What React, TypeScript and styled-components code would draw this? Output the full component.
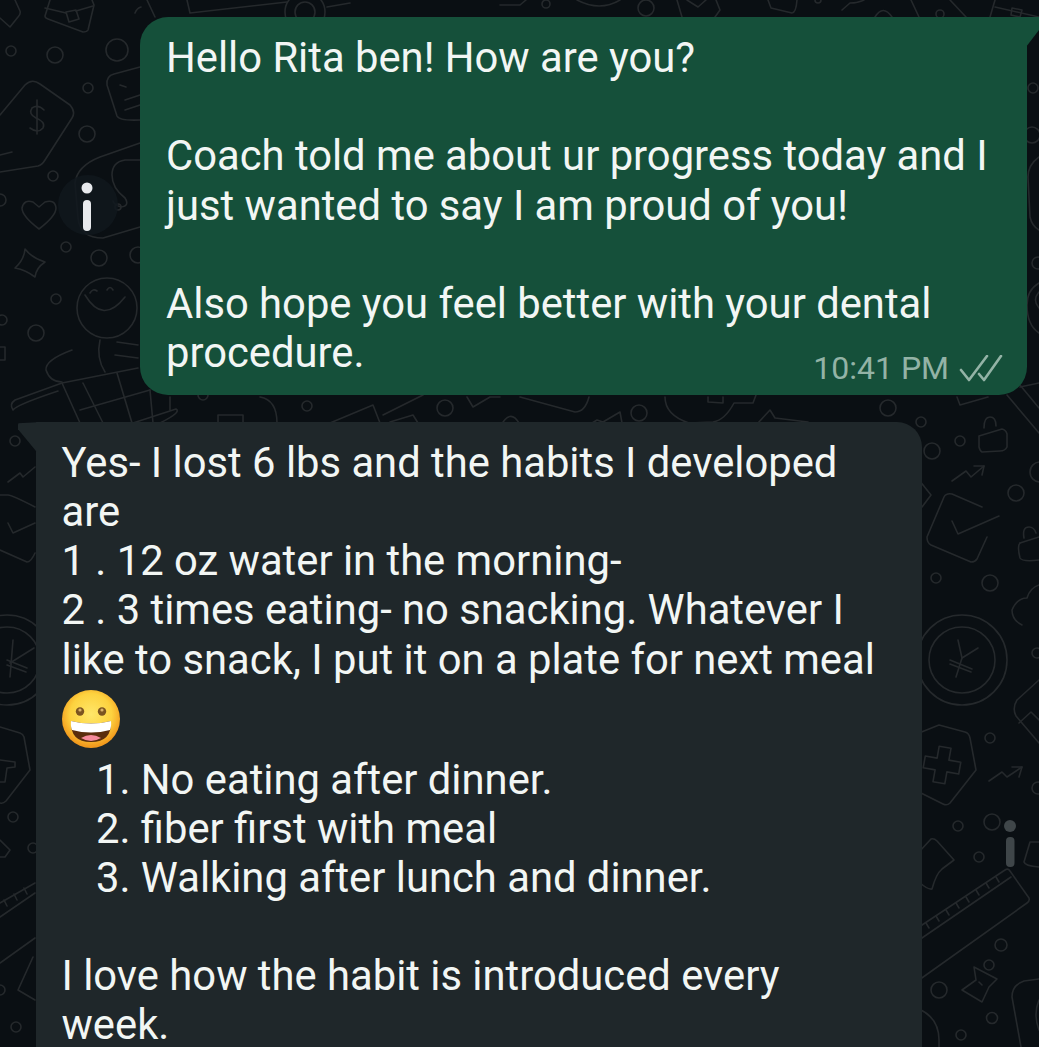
import React from "react";
import styled, { createGlobalStyle } from "styled-components";

const Global = createGlobalStyle`
  html, body { margin: 0; padding: 0; background: #0a0f13; }
  body { width: 1039px; height: 1047px; overflow: hidden; }
`;

const Page = styled.main`
  position: relative;
  width: 1039px;
  height: 1047px;
  overflow: hidden;
  box-sizing: border-box;
  padding-top: 17px;
  display: flex;
  flex-direction: column;
  gap: 27px;
  background: #0a0f13;
  font-family: Roboto, "Liberation Sans", sans-serif;
  color: #f2f6f4;
`;

const DoodleLayer = styled.svg`
  position: absolute;
  inset: 0;
  fill: none;
  stroke: #25292c;
  stroke-width: 1.6;
  stroke-linecap: round;
  stroke-linejoin: round;
`;

const Bubble = styled.section<{ $sent?: boolean }>`
  position: relative;
  flex: none;
  box-sizing: border-box;
  background: ${(p) => (p.$sent ? "#15503a" : "#1f272a")};
  margin-left: ${(p) => (p.$sent ? "140px" : "36px")};
  width: ${(p) => (p.$sent ? "887px" : "886px")};
  padding: ${(p) => (p.$sent ? "16px 24px 14px 26px" : "15.5px 24px 40px 25.5px")};
  border-radius: ${(p) => (p.$sent ? "28px 0 28px 28px" : "0 25px 25px 25px")};
  &::after {
    content: "";
    position: absolute;
    top: 0;
    background: inherit;
    ${(p) =>
      p.$sent
        ? "right: -12px; width: 13px; height: 30px; clip-path: polygon(0 0, 100% 0, 100% 13px, 0 100%);"
        : "left: -18px; width: 19px; height: 30px; border-radius: 3px 0 0 0; clip-path: polygon(0 1px, 100% 0, 100% 100%, 0 7px);"}
  }
`;

const Message = styled.div`
  font-size: 41.75px;
  line-height: 49.2px;
  white-space: pre;
`;

const FooterRow = styled.div`
  display: flex;
  justify-content: space-between;
  align-items: baseline;
`;

const Meta = styled.span`
  display: inline-flex;
  align-items: center;
  gap: 10px;
  font-size: 32px;
  line-height: 49px;
  color: #93b3a6;
  position: relative;
  top: 12px;
`;

const Ticks = styled.svg`
  width: 44px;
  height: 28px;
  fill: none;
  stroke: #93b3a6;
  stroke-width: 2.6;
  stroke-linecap: round;
  stroke-linejoin: round;
`;

const EmojiRow = styled.div`
  height: 71px;
  display: flex;
  align-items: center;
`;

const NumberedList = styled.div`
  padding-left: 34.5px;
  margin-bottom: 48.2px;
`;

const Smile = () => (
  <svg width="58" height="58" viewBox="0 0 58 58" role="img" aria-label="grinning face">
    <defs>
      <radialGradient id="face" cx="50%" cy="42%" r="55%">
        <stop offset="0%" stopColor="#ffe76a" />
        <stop offset="65%" stopColor="#fdd23f" />
        <stop offset="100%" stopColor="#f29a1d" />
      </radialGradient>
    </defs>
    <circle cx="29" cy="29" r="29" fill="url(#face)" />
    <circle cx="18" cy="21.5" r="4.2" fill="#7b5420" />
    <circle cx="40" cy="21.5" r="4.2" fill="#7b5420" />
    <circle cx="18" cy="20" r="1.6" fill="#d9b26c" />
    <circle cx="40" cy="20" r="1.6" fill="#d9b26c" />
    <path d="M9 31 Q29 36 49 31 Q50 52 29 52 Q8 52 9 31Z" fill="#5a2d0c" />
    <path d="M9 31 Q29 36 49 31 Q49.5 37 48 40 Q29 45 10 40 Q8.5 37 9 31Z" fill="#fff" />
    <path d="M19 48 Q29 42 39 48 Q29 54 19 48Z" fill="#f58a9a" />
  </svg>
);

const lines: string[] = [
  // top edge
  "M500 5H520L526 0", "M577 0Q600 12 620 0", "M677 0L682 17", "M687 0L698 7L706 0", "M716 0L720 10L715 17",
  "M768 0L771 8L792 13Q796 13 797 0", "M842 10L850 3Q858 3 864 0", "M911 0L919 17", "M950 0L966 17",
  "M995 0L990 17", "M995 7L1039 17", "M1012 8L1022 10L1020 17L1011 15Z", "M875 17Q883 4 892 17",
  "M147 0L155 17", "M187 0L190 13L287 2", "M327 7L350 3", "M135 13Q137 8 141 7",
  // top-left
  "M15 0L20 11Q21 14 18 17L10 27L0 18", "M50 0L45 16Q45 18 48 19L83 32Q87 32 88 30L94 5L92 0",
  "M66 12L76 10L79 19L69 22Z", "M45 8L66 13", "M76 11L93 6",
  "M0 115L25 85Q32 78 40 84L70 105Q76 112 72 118L45 160Q42 165 38 166L0 172", "M0 155L12 152",
  "M44 110Q38 104 32 108Q28 114 36 118Q46 122 43 128Q38 134 30 128", "M37 100L37 134",
  "M140 67L114 74Q106 76 107 85L117 116Q119 121 140 120", "M120 85L126 87", "M125 100L140 95", "M125 110L140 105",
  "M39 229Q22 216 22 208Q24 199 33 202L39 207L45 202Q55 199 56 208Q56 216 39 229Z",
  "M25 249Q32 258 45 262Q36 268 35 277Q26 270 15 268Q24 260 25 249Z",
  "M140 143L100 157Q77 166 75 183L78 218Q80 238 103 238L140 227", "M140 160H125Q112 162 112 175Q112 188 125 198Q130 206 121 207Q114 205 113 201",
  "M85 295Q103 325 125 297", "M90 293Q93 288 97 291", "M107 290Q110 285 113 290",
  "M72 350Q45 360 46 370Q50 382 62 382", "M100 340Q96 358 105 372", "M117 342L138 345", "M115 355L138 358",
  "M0 347H5V360H0",
  // cart
  "M62 383L15 400Q9 404 13 410Q16 405 58 391", "M62 383L138 368", "M62 383L80 423", "M83 383L103 423", "M117 373L132 423", "M80 410L150 390", "M150 390L153 423", "M170 397V410", "M133 423L176 409Q182 412 160 423",
  // band between bubbles
  "M218 423V415H243V423", "M260 397Q277 400 277 423", "M330 423L373 405L380 423", "M383 415L423 395", "M390 422L413 415L418 423", "M467 397L473 407L490 397H500",
  "M520 397L575 412Q585 412 589 397", "M500 427Q510 408 519 423", "M584 428L597 420L603 422L620 412L622 423",
  "M665 397Q665 415 689 423L713 422Q725 420 734 403H753L756 395", "M708 397V402L723 403V397", "M758 423L770 410L775 418L808 422",
  "M957 397L960 405L988 397",
  // ruler top right
  "M1007 395L1039 433", "M1020 385L1039 408", "M1020 387L1039 383",
  // right of first bubble
  "M1039 157Q1028 165 1028 177L1030 217Q1032 226 1039 230", "M1039 283Q1027 290 1027 305Q1027 325 1039 333", "M1039 292Q1032 300 1039 308",
  // right column
  "M979 436L1002 429Q1006 430 1007 434L1007 447Q1005 451 1000 451L982 452Q980 451 979 447Z", "M984 428Q984 417 990 417Q996 417 996 426",
  "M952 481L966 471L971 477L984 466", "M974 466H984L982 475",
  "M982 507L952 494Q946 493 944 497L927 537Q927 543 931 545L971 562Q975 562 977 559L987 537",
  "M952 521L958 534L999 516",
  "M1020 543L1039 537", "M1020 543Q1017 546 1020 558Q1022 562 1039 560", "M1024 538Q1022 527 1029 527Q1034 527 1036 533",
  "M1039 585Q1030 588 1027 598Q1017 598 1012 610Q1012 620 1022 625",
  "M919 480L931 495L922 507",
  "M958 640L962 658", "M978 648L962 658L956 677", "M950 660L972 669", "M950 664L971 672",
  "M919 733L939 725L965 732Q969 733 970 738L976 770L950 803Q947 806 943 804L919 792",
  "M939.2 746.2L951 748.3L948.9 760.1L960.8 762.2L958.7 774L946.9 771.9L944.8 783.8L933 781.7L935.1 769.9L923.2 767.8L925.3 756L937.1 758.1Z",
  "M989 781L1002 772L1007 777L1022 767", "M1012 767H1022L1019 777",
  "M1039 680L1017 700Q1012 708 1016 716L1039 743", "M1019 723L1031 712L1039 720",
  "M1039 842L1030 842L1024 862Q1025 866 1039 867",
  "M919 852L931 839Q934 838 937 841L954 860L942 869Q936 874 932 889Q928 890 919 882",
  "M919 927L1005 870Q1008 868 1010 871L1029 898Q1030 901 1027 903L919 980", "M919 940L1011 877",
  "M926 923L929 928", "M936 916L939 921", "M946 910L949 915", "M956 903L959 908", "M966 897L969 902", "M976 890L979 895", "M986 883L989 888", "M996 877L999 882",
  "M974 967L997 979L989 987L982 1002L962 990L976 980Z", "M979 982L982 985",
  "M1039 979L1024 981Q1012 985 1012 997L1021 1047", "M1039 1000Q1033 1014 1039 1030",
  "M919 1009Q939 1018 939 1040V1047",
  // left column
  "M8 482L20 473L23 477L35 467", "M0 495H8Q12 495 35 507", "M0 550L27 562Q31 562 35 553", "M8 523L13 533L35 523",
  "M13 640L10 677", "M34 648L10 663", "M7 660L27 668", "M7 665L26 672",
  "M0 727L20 733Q23 734 24 737L30 770L6 801Q3 804 0 803", "M0 760L15 762V767L7 768L5 782H0",
  "M0 840L10 850L5 857H0", "M0 903L35 883", "M0 917L35 893", "M4 900L7 906", "M14 894L17 900", "M24 888L27 894", "M0 963L35 938",
  "M33 957L18 990L35 1000",
];

const rings: [number, number, number][] = [
  [546, 4, 4], [646, 8, 8], [818, 0, 3], [940, 14, 4], [305, 12, 20], [305, 12, 10],
  [11, 51, 5], [55, 55, 8], [117, 50, 11], [88, 88, 5], [87, 134, 8], [53, 176, 5], [66, 247, 5], [99, 258, 8],
  [56, 299, 5], [36, 333, 8], [2, 320, 5], [0, 200, 6], [107, 308, 30], [138, 255, 8], [118, 207, 3],
  [203, 395, 5], [307, 406, 5], [445, 408, 8], [639, 413, 8], [888, 408, 8], [921, 422, 5],
  [1033, 88, 5], [1032, 135, 8], [1038, 263, 6],
  [932, 451, 8], [960, 441, 5], [1016, 493, 8], [936, 578, 5], [990, 583, 8], [1040, 472, 10],
  [962, 660, 45], [962, 660, 33], [7, 660, 45], [7, 660, 33], [1037, 653, 5], [990, 738, 5],
  [958, 826, 5], [992, 822, 8], [1038, 788, 6], [979, 857, 5], [1001, 945, 6], [939, 990, 8], [992, 1018, 5.5], [961, 1035, 5],
  [989, 965, 5], [15, 441, 5], [13, 817, 5], [33, 848, 5], [16, 1027, 5], [0, 990, 5],
];

const Doodles = () => (
  <DoodleLayer width="1039" height="1047" viewBox="0 0 1039 1047" aria-hidden="true">
    {lines.map((d, i) => (
      <path key={i} d={d} />
    ))}
    {rings.map(([cx, cy, r], i) => (
      <circle key={i} cx={cx} cy={cy} r={r} />
    ))}
    <circle cx="88" cy="205" r="30" fill="#11181d" fillOpacity="0.85" stroke="none" />
    <circle cx="87" cy="188" r="5.5" fill="#e8eaed" stroke="none" />
    <rect x="83" y="200" width="8" height="31" rx="4" fill="#e8eaed" stroke="none" />
    <circle cx="1010" cy="826" r="6" fill="#3f4649" stroke="none" />
    <rect x="1006" y="837" width="8.5" height="30" rx="4" fill="#3f4649" stroke="none" />
  </DoodleLayer>
);

export default function App() {
  return (
    <Page>
      <Global />
      <Doodles />
      <Bubble $sent>
        <Message>{`Hello Rita ben! How are you?

Coach told me about ur progress today and I
just wanted to say I am proud of you!

Also hope you feel better with your dental`}</Message>
        <FooterRow>
          <Message>procedure.</Message>
          <Meta>
            10:41 PM
            <Ticks viewBox="0 0 44 28">
              <path d="M2 15L10 25L28 1" />
              <path d="M20 19L25 25L42 1" />
            </Ticks>
          </Meta>
        </FooterRow>
      </Bubble>
      <Bubble>
        <Message>{`Yes- I lost 6 lbs and the habits I developed
are
1 . 12 oz water in the morning-
2 . 3 times eating- no snacking. Whatever I
like to snack, I put it on a plate for next meal`}</Message>
        <EmojiRow>
          <Smile />
        </EmojiRow>
        <NumberedList>
          <Message>{`1. No eating after dinner.
2. fiber first with meal
3. Walking after lunch and dinner.`}</Message>
        </NumberedList>
        <Message>{`I love how the habit is introduced every
week.`}</Message>
      </Bubble>
    </Page>
  );
}
